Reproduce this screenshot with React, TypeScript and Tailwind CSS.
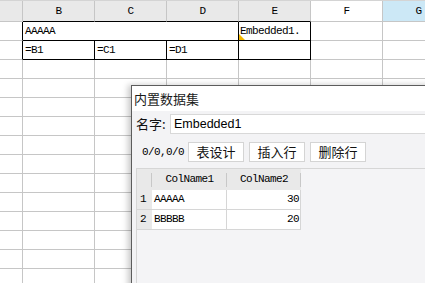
const GRID = 'border-r border-b border-[#c6c6c6]';
const MONO = 'font-mono text-[11px] tracking-[-0.6px] text-black';
const CJK = "font-['Noto_Sans_CJK_SC','Liberation_Sans',sans-serif]";

function HeaderCell({ w, label, bg, black }: { w: string; label: string; bg: string; black?: boolean }) {
  return (
    <div
      className={`${w} ${bg} h-full shrink-0 flex items-center justify-center border-r border-[#c6c6c6] border-b ${
        black ? 'border-b-black' : 'border-b-[#c6c6c6]'
      } ${MONO}`}
    >
      {label}
    </div>
  );
}

function PlainRow() {
  return (
    <div className="flex h-[19px]">
      <div className={`w-[23px] shrink-0 ${GRID}`} />
      <div className={`w-[72px] shrink-0 ${GRID}`} />
      <div className={`w-[72px] shrink-0 ${GRID}`} />
      <div className={`w-[72px] shrink-0 ${GRID}`} />
      <div className={`w-[72px] shrink-0 ${GRID}`} />
      <div className={`w-[72px] shrink-0 ${GRID}`} />
      <div className={`w-[72px] shrink-0 ${GRID}`} />
    </div>
  );
}

function ToolButton({ label }: { label: string }) {
  return (
    <div className={`w-[56px] h-[20px] shrink-0 bg-white border border-[#d4d4d4] flex items-center justify-center text-[13px] text-[#111] ${CJK}`}>
      {label}
    </div>
  );
}

export default function App() {
  const rows = [
    { n: '1', a: 'AAAAA', b: '30' },
    { n: '2', a: 'BBBBB', b: '20' },
  ];

  return (
    <div className="relative w-[425px] h-[283px] overflow-hidden bg-white">
      {/* column header */}
      <div className="flex h-[22px] border-t border-[#d4d4d4]">
        <HeaderCell w="w-[23px]" label="" bg="bg-[#e9e9e9]" />
        <HeaderCell w="w-[72px]" label="B" bg="bg-[#e9e9e9]" black />
        <HeaderCell w="w-[72px]" label="C" bg="bg-[#e9e9e9]" black />
        <HeaderCell w="w-[72px]" label="D" bg="bg-[#e9e9e9]" black />
        <HeaderCell w="w-[72px]" label="E" bg="bg-[#e9e9e9]" black />
        <HeaderCell w="w-[72px]" label="F" bg="bg-white" />
        <HeaderCell w="w-[72px]" label="G" bg="bg-[#cce8f6]" />
      </div>

      {/* row 1 */}
      <div className="flex h-[19px]">
        <div className="w-[23px] shrink-0 border-r border-r-black border-b border-b-[#c6c6c6]" />
        <div className={`w-[216px] shrink-0 border-r border-b border-black pl-[2px] flex items-center ${MONO}`}>AAAAA</div>
        <div className={`relative w-[72px] shrink-0 border-r border-b border-black pl-[1px] flex items-center ${MONO}`}>
          Embedded1.
          <svg className="absolute left-0 bottom-0" width="6" height="6" viewBox="0 0 6 6">
            <polygon points="0,0 6,6 0,6" fill="#f5b800" />
          </svg>
        </div>
        <div className={`w-[72px] shrink-0 ${GRID}`} />
        <div className={`w-[72px] shrink-0 ${GRID}`} />
      </div>

      {/* row 2 */}
      <div className="flex h-[19px]">
        <div className="w-[23px] shrink-0 border-r border-r-black border-b border-b-[#c6c6c6]" />
        {['=B1', '=C1', '=D1', ''].map((t, i) => (
          <div key={i} className={`w-[72px] shrink-0 border-r border-b border-black pl-[2px] flex items-center ${MONO}`}>
            {t}
          </div>
        ))}
        <div className={`w-[72px] shrink-0 ${GRID}`} />
        <div className={`w-[72px] shrink-0 ${GRID}`} />
      </div>

      {Array.from({ length: 12 }).map((_, i) => (
        <PlainRow key={i} />
      ))}

      {/* dataset dialog */}
      <div className="absolute left-[131px] top-[85px] w-[320px] h-[230px] border-l border-t border-[#5c5c5c] bg-[#f3f3f5] shadow-[-3px_0_6px_rgba(0,0,0,0.22)] flex flex-col">
        <div className={`h-[25px] bg-white flex items-center pl-[2px] text-[13px] text-[#1a1a1a] ${CJK}`}>内置数据集</div>

        <div className="h-[26px] flex items-center pl-[4px]">
          <span className={`w-[34px] text-[13px] text-[#111] ${CJK}`}>名字:</span>
          <div className="flex-1 h-[20px] bg-white border border-[#d8d8d8] flex items-center pl-[3px] font-['Liberation_Sans',sans-serif] text-[12.5px] text-black">
            Embedded1
          </div>
        </div>

        <div className="flex items-center gap-[5px] pl-[10px] mt-[5px]">
          <span className={`w-[41px] ${MONO}`}>0/0,0/0</span>
          <ToolButton label="表设计" />
          <ToolButton label="插入行" />
          <ToolButton label="删除行" />
        </div>

        <div className="flex-1 mt-[6px] ml-[4px] border-l border-t border-[#d6d6d6] bg-[#f4f4f6]">
          <div className="flex h-[21px] w-[164px] bg-[#e9e9e9]">
            <div className="w-[15px] shrink-0 flex items-center justify-end">
              <span className="h-[14px] border-r border-[#c8c8c8]" />
            </div>
            <div className={`w-[75px] shrink-0 flex items-center justify-center relative ${MONO}`}>
              ColName1
              <span className="absolute right-0 top-[4px] h-[14px] border-r border-[#c8c8c8]" />
            </div>
            <div className={`w-[74px] shrink-0 flex items-center justify-center relative ${MONO}`}>
              ColName2
              <span className="absolute right-0 top-[4px] h-[14px] border-r border-[#c8c8c8]" />
            </div>
          </div>
          {rows.map((r) => (
            <div key={r.n} className="flex h-[20px] w-[164px]">
              <div className={`w-[15px] shrink-0 bg-[#e9e9e9] border-b border-[#d6d6d6] pl-[3px] flex items-center ${MONO}`}>{r.n}</div>
              <div className={`w-[75px] shrink-0 bg-white border-r border-b border-[#d6d6d6] pl-[2px] flex items-center ${MONO}`}>{r.a}</div>
              <div className={`w-[74px] shrink-0 bg-white border-r border-b border-[#d6d6d6] pr-[1px] flex items-center justify-end ${MONO}`}>{r.b}</div>
            </div>
          ))}
        </div>
      </div>
    </div>
  );
}
